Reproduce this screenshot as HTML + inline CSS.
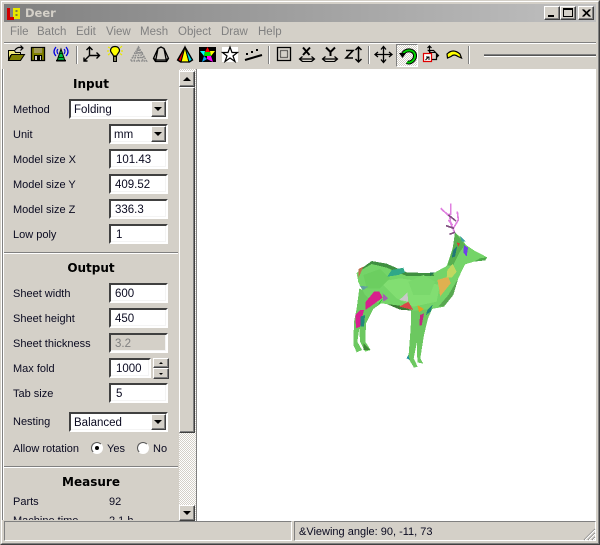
<!DOCTYPE html>
<html><head><meta charset="utf-8"><style>
html,body{margin:0;padding:0;width:600px;height:545px;overflow:hidden;background:#d4d0c8}
*{box-sizing:border-box}
body{font:11px/13px "Liberation Sans",sans-serif;color:#000;position:relative}
.a{position:absolute}
.t{position:absolute;white-space:nowrap;color:#0a0a20;margin-top:1px}
.h{position:absolute;left:4px;width:174px;text-align:center;font:bold 12px/15px "DejaVu Sans",sans-serif;color:#000;margin-top:1px}
.m{position:absolute;top:26px;color:#808080;white-space:nowrap;font-size:11.500px}
.i{position:absolute;height:20px;background:#fff;border:2px solid;border-color:#404040 #fff #fff #404040;padding:2px 0 0 3px;line-height:14px;box-shadow:0 0 0 0 #fff,inset -1px -1px 0 #f4f4f4;white-space:nowrap;font-size:11.500px;color:#0a0a20}
.btn{position:absolute;background:#d4d0c8;border:1px solid;border-color:#fff #404040 #404040 #fff;box-shadow:inset -1px -1px 0 #808080}
.ar{position:absolute;width:0;height:0;border-left:4px solid transparent;border-right:4px solid transparent}
.sep{position:absolute;top:46px;width:2px;height:18px;background:#808080;border-right:1px solid #fff}
svg{position:absolute;overflow:visible}
</style></head><body>

<!-- window frame -->
<div class="a" style="left:0;top:0;width:600px;height:545px;border:1px solid;border-color:#d4d0c8 #404040 #404040 #d4d0c8"></div>
<div class="a" style="left:1px;top:1px;width:598px;height:543px;border:1px solid;border-color:#fff #808080 #808080 #fff"></div>

<!-- title bar -->
<div class="a" style="left:4px;top:4px;width:592px;height:18px;background:linear-gradient(90deg,#808080,#c0c0c0)"></div>
<svg style="left:0;top:0" width="24" height="24" viewBox="0 0 24 24">
<path d="M7 8h3v9h4v3H7z" fill="#d00000"/><path d="M13 8h7v11h-6v-2h-1z" fill="#e8e800"/><path d="M15.500 10h2v2h-2zM15.500 14h2v2h-2z" fill="#808040"/>
</svg>
<div class="a" style="left:25px;top:6px;font:bold 11.500px/14px 'DejaVu Sans',sans-serif;color:#d4d0c8">Deer</div>
<div class="btn" style="left:544px;top:6px;width:16px;height:14px"><div class="a" style="left:3px;top:8px;width:6px;height:2px;background:#000"></div></div>
<div class="btn" style="left:560px;top:6px;width:16px;height:14px"><div class="a" style="left:2px;top:1px;width:10px;height:9px;border:1px solid #000;border-top-width:2px"></div></div>
<div class="btn" style="left:578px;top:6px;width:16px;height:14px"><svg style="left:3px;top:2px" width="9" height="8"><path d="M0.500 0.500L7.500 7.500M1.500 0.500L8.500 7.500M7.500 0.500L0.500 7.500M8.500 0.500L1.500 7.500" stroke="#000"/></svg></div>

<!-- menu -->
<div class="m" style="left:10px">File</div>
<div class="m" style="left:37px">Batch</div>
<div class="m" style="left:76px">Edit</div>
<div class="m" style="left:106px">View</div>
<div class="m" style="left:140px">Mesh</div>
<div class="m" style="left:178px">Object</div>
<div class="m" style="left:221px">Draw</div>
<div class="m" style="left:258px">Help</div>
<div class="a" style="left:4px;top:42px;width:592px;height:2px;background:#808080;border-bottom:1px solid #fff"></div>

<!-- toolbar: svg y = screen y - 42 -->
<svg style="left:0;top:42px" width="600" height="26" viewBox="0 0 600 26" fill="none" stroke="#000">
<!-- open -->
<path d="M8.500 8.500h6l1 2h5v3H10.500l-2 5z" fill="#f0e878"/><path d="M8.500 18.500l3-6h13l-4 6z" fill="#808000"/><path d="M15 8q3-4 7-2M20.500 3.500l2.500 2.500-2.500 2.500" stroke-width="1.200"/>
<!-- save -->
<path d="M31.500 5.500h13v13h-13z" fill="#808000" stroke-width="1.300"/><path d="M34 6v5h8V6z" fill="#a09858" stroke="none"/><path d="M34.500 13.500h7v5h-7z" fill="#d4d0c8"/><path d="M37 14h3v4h-3z" fill="#000" stroke="none"/>
<!-- antenna -->
<path d="M58 7q-2 2 0 5M64 7q2 2 0 5M56 5q-4 5 0 9M66 5q4 5 0 9" stroke="#0000e0" stroke-width="1.200"/>
<path d="M61 7l4 12h-8z" fill="#00c040"/><path d="M57.500 15.500h7M59 11.500h4" stroke="#003000"/><path d="M56 18.500h10" stroke-width="1.500"/>
<!-- axes -->
<path d="M89.500 5v9M86.500 8l3-3 3 3M89.500 13.500h10M96.500 10.500l3 3-3 3M89.500 13.500l-5.500 5.500M84 15.500V19h3.500" stroke-width="1.400"/>
<!-- bulb -->
<path d="M115 4.500c-3 0-4.500 2-4.500 4 0 2 2.500 3.500 3 5.500h3c.5-2 3-3.500 3-5.500 0-2-1.500-4-4.500-4z" fill="#ffff00" stroke-width="1.200"/><path d="M113.500 14.500h3v5h-3z" fill="#0000c0"/><path d="M114 16h2M114 18h2" stroke="#ffff00"/><path d="M108 5l2 1M107 9h2M122 4l-2 2M123 9h-2M122 13l-2-1.500M108 13l2-1.500" stroke="#e8e800" stroke-width="1.200"/>
<!-- mesh -->
<path d="M138.500 5l8 14h-16zM134 11h9M132 15.500h13M138.500 5v14M134 19l4.500-14 4.500 14" stroke="#8c8c8c" stroke-dasharray="1.500 1" stroke-width="1.500"/>
<!-- cone -->
<path d="M161 5l-3 1.500-4.500 10 2 3h11l2-3-4.500-10zM158 6.500l-2.500 13M164 6.500l2.500 13M153.500 16.500l3 1.500h9l3-1.500" stroke-width="1.300"/>
<!-- colour cone -->
<path d="M185 5l-7 13 3 2z" fill="#e00000"/><path d="M185 5l-4 15h8z" fill="#ffff00"/><path d="M185 5l4 15 3.500-2z" fill="#00d0e0"/><path d="M185 5l-7.500 13 3 2h9l3-2z" stroke-width="1.300"/>
<!-- colour star -->
<path d="M199 5h17v15h-17z" fill="#000" stroke="none"/>
<path d="M207.500 5l-2.500 5h5z" fill="#f00" stroke="none"/><path d="M200 9h5l-1 5z" fill="#00ffff" stroke="none"/><path d="M205 10h5l1 4h-7z" fill="#00e000" stroke="none"/><path d="M210 9h5l-4 5z" fill="#ffff00" stroke="none"/><path d="M204 14l-2 6 5-3z" fill="#00a0ff" stroke="none"/><path d="M207 14h4l2 6-6-3z" fill="#ff00ff" stroke="none"/>
<!-- star -->
<path d="M222 5h16v15h-16z" fill="#fff" stroke="none"/>
<path d="M230 5l2 5.500h5.500l-4.500 3.500 2 5.500-5-3.500-5 3.500 2-5.500-4.500-3.500h5.500z" stroke-width="1.200"/>
<!-- dots -->
<path d="M245 18l17-5" stroke-width="2"/><path d="M246 11h2v2h-2zM251 9h2v2h-2zM256 7h2v2h-2z" fill="#000" stroke="none"/>
<!-- box -->
<path d="M277.500 5.500h13v13h-13z" stroke-width="1.300"/><path d="M280.500 8.500h7v7h-7z" stroke-dasharray="1 1" stroke-width="1.200"/>
<!-- X -->
<path d="M303 5.500l6.500 7.500M310 5.500l-7 7.500" stroke-width="2"/><path d="M300 17h14M302.500 14.500l-3 2.500 3 2.500M311.500 14.500l3 2.500-3 2.500" stroke-width="1.200"/><path d="M302 19.500h10" stroke-width="1"/>
<!-- Y -->
<path d="M326 5.500l4.500 4.500 4.500-4.500M330.500 10v4" stroke-width="2"/><path d="M323 17h14M325.500 14.500l-3 2.500 3 2.500M334.500 14.500l3 2.500-3 2.500" stroke-width="1.200"/><path d="M325 19.500h10"/>
<!-- Z -->
<path d="M346 8.500h7l-7 7.500h7" stroke-width="1.600"/><path d="M358.500 6v13M355.500 8l3-3 3 3M355.500 17l3 3 3-3" stroke-width="1.500"/>
<!-- move -->
<path d="M383.500 5v15M375.500 12.500h16M381 7.500l2.500-3 2.500 3M381 17.500l2.500 3 2.500-3M378 10l-3 2.500 3 2.500M389 10l3 2.500-3 2.500" stroke-width="1.300"/>
<!-- cube -->
<path d="M428.500 8.500h5l3 3v6h-6V10.500z" stroke-width="1.200"/><path d="M429 10.500h7" stroke-width="1"/><path d="M429.500 4v5M427.500 6l2-2 2 2M436 13.500h2M436.500 11.500l2 2-2 2" stroke-width="1.200"/>
<path d="M423.500 11.500h8v8h-8z" fill="#fff" stroke="#e00000" stroke-width="1.200"/><path d="M425.500 18l3-3M426 15h3v3" stroke-width="1"/>
<!-- yellow arc -->
<path d="M447 12q6-6 13 0l1.500 4-3.500-1.500q-4-3-7 0l-3.500 1.500z" fill="#ffff00" stroke-width="1.200"/>
</svg>
<!-- pressed rotate button -->
<div class="a" style="left:396px;top:44px;width:22px;height:23px;border:1px solid;border-color:#808080 #fff #fff #808080;background:repeating-conic-gradient(#fff 0 25%,#d4d0c8 0 50%) 0 0/2px 2px"></div>
<svg style="left:396px;top:44px" width="22" height="23" fill="none">
<path d="M7 10c2-5 11-5 12 1 .5 5-5 9-8 7" stroke="#000" stroke-width="4"/><path d="M7 10c2-5 11-5 12 1 .5 5-5 9-8 7" stroke="#00d000" stroke-width="2"/>
<path d="M3 9l7 0-3.500 5z" fill="#000"/>
</svg>
<div class="sep" style="left:76px"></div>
<div class="sep" style="left:268px"></div>
<div class="sep" style="left:368px"></div>
<div class="sep" style="left:468px"></div>
<div class="a" style="left:484px;top:54px;width:112px;height:3px;background:#555;border-top:1px solid #808080;border-bottom:1px solid #fff"></div>

<!-- left panel -->
<div class="a" style="left:2px;top:69px;width:2px;height:451px;background:#fff;border-left:1px solid #808080"></div>
<div class="a" style="left:0;top:0;width:179px;height:520px;overflow:hidden">
<div class="h" style="top:76px">Input</div>
<div class="t" style="left:13px;top:103px">Method</div>
<div class="i" style="left:69px;top:99px;width:99px">Folding</div>
<div class="t" style="left:13px;top:128px">Unit</div>
<div class="i" style="left:109px;top:124px;width:59px;padding-left:3px">mm</div>
<div class="t" style="left:13px;top:153px">Model size X</div>
<div class="i" style="left:109px;top:149px;width:59px;padding-left:5px">101.43</div>
<div class="t" style="left:13px;top:178px">Model size Y</div>
<div class="i" style="left:109px;top:174px;width:59px;padding-left:4px">409.52</div>
<div class="t" style="left:13px;top:203px">Model size Z</div>
<div class="i" style="left:109px;top:199px;width:59px;padding-left:4px">336.3</div>
<div class="t" style="left:13px;top:228px">Low poly</div>
<div class="i" style="left:109px;top:224px;width:59px;padding-left:5px">1</div>
<div class="a" style="left:4px;top:252px;width:174px;height:2px;background:#808080;border-bottom:1px solid #fff"></div>
<div class="h" style="top:260px">Output</div>
<div class="t" style="left:13px;top:287px">Sheet width</div>
<div class="i" style="left:109px;top:283px;width:59px;padding-left:4px">600</div>
<div class="t" style="left:13px;top:312px">Sheet height</div>
<div class="i" style="left:109px;top:308px;width:59px;padding-left:4px">450</div>
<div class="t" style="left:13px;top:337px">Sheet thickness</div>
<div class="i" style="left:109px;top:333px;width:59px;padding-left:4px;background:#d4d0c8;color:#808080">3.2</div>
<div class="t" style="left:13px;top:362px">Max fold</div>
<div class="i" style="left:109px;top:358px;width:42px;padding-left:5px">1000</div>
<div class="t" style="left:13px;top:387px">Tab size</div>
<div class="i" style="left:109px;top:383px;width:59px;padding-left:5px">5</div>
<div class="t" style="left:13px;top:415px">Nesting</div>
<div class="i" style="left:69px;top:412px;width:99px">Balanced</div>
<div class="t" style="left:13px;top:442px">Allow rotation</div>
<div class="t" style="left:107px;top:442px">Yes</div>
<div class="t" style="left:153px;top:442px">No</div>
<div class="a" style="left:91px;top:442px;width:12px;height:12px;border-radius:50%;background:#fff;border:1px solid;border-color:#555 #fff #fff #555"></div>
<div class="a" style="left:95px;top:446px;width:4px;height:4px;border-radius:50%;background:#000"></div>
<div class="a" style="left:137px;top:442px;width:12px;height:12px;border-radius:50%;background:#fff;border:1px solid;border-color:#555 #fff #fff #555"></div>
<div class="a" style="left:4px;top:466px;width:174px;height:2px;background:#808080;border-bottom:1px solid #fff"></div>
<div class="h" style="top:474px">Measure</div>
<div class="t" style="left:13px;top:495px">Parts</div>
<div class="t" style="left:109px;top:495px">92</div>
<div class="t" style="left:13px;top:514px">Machine time</div>
<div class="t" style="left:109px;top:514px">2.1 h</div>
</div>
<!-- combo buttons -->
<div class="btn" style="left:151px;top:101px;width:15px;height:16px"><div class="ar" style="left:2px;top:5px;border-top:4px solid #000"></div></div>
<div class="btn" style="left:151px;top:126px;width:15px;height:16px"><div class="ar" style="left:2px;top:5px;border-top:4px solid #000"></div></div>
<div class="btn" style="left:151px;top:414px;width:15px;height:16px"><div class="ar" style="left:2px;top:5px;border-top:4px solid #000"></div></div>
<!-- spinner -->
<div class="btn" style="left:153px;top:358px;width:16px;height:10px"><div class="ar" style="left:5px;top:3px;border-left-width:2px;border-right-width:2px;border-bottom:2px solid #000"></div></div>
<div class="btn" style="left:153px;top:368px;width:16px;height:11px"><div class="ar" style="left:5px;top:4px;border-left-width:2px;border-right-width:2px;border-top:2px solid #000"></div></div>

<!-- scrollbar -->
<div class="a" style="left:179px;top:69px;width:17px;height:452px;background:repeating-conic-gradient(#fff 0 25%,#d4d0c8 0 50%) 0 0/2px 2px"></div>
<div class="btn" style="left:179px;top:71px;width:16px;height:16px"><div class="ar" style="left:3px;top:5px;border-bottom:4px solid #000"></div></div>
<div class="btn" style="left:179px;top:87px;width:16px;height:346px"></div>
<div class="btn" style="left:179px;top:505px;width:16px;height:16px"><div class="ar" style="left:3px;top:5px;border-top:4px solid #000"></div></div>

<!-- canvas -->
<div class="a" style="left:196px;top:69px;width:400px;height:452px;background:#fff;border-left:1px solid #808080"></div>
<svg style="left:340px;top:195px" width="160" height="180" viewBox="0 0 480 540" shape-rendering="crispEdges">
<!-- antlers -->
<g fill="none" stroke-width="5">
<path d="M345 115L332 85 328 55M332 25L332 60M302 40L330 65M340 100L355 75 352 50M338 90L325 75" stroke="#e080e0"/>
<path d="M342 100L318 92M345 112L328 118M325 60L348 78" stroke="#805080"/>
</g>
<!-- hind legs -->
<path d="M58 280L130 320 100 342 78 385 76 440 92 465 75 470 60 440 58 400 52 440 66 465 50 472 40 450 42 380 50 340z" fill="#6cc860"/>
<!-- front legs -->
<path d="M214 335L282 330 264 370 252 420 241 490 250 506 232 502 231 440 221 490 233 515 222 518 205 490 212 400z" fill="#6cc860"/>
<!-- body -->
<path d="M345 112L365 130 378 150 405 168 442 187 436 196 402 200 375 208 355 250 340 300 312 335 275 342 220 347 180 344 140 327 100 322 75 300 55 262 50 235 65 220 95 198 140 206 200 232 280 235 320 213 338 160z" fill="#74d468"/>
<path d="M95 198L140 206 200 232 280 235 282 243 200 243 140 218 95 207 62 226 65 220z" fill="#3f8f40"/>
<path d="M345 112L360 130 375 150 360 170 340 210 322 212 338 160z" fill="#58b050"/>
<path d="M355 250L340 300 312 335 295 335 325 300z" fill="#58a850"/>
<path d="M140 327L180 344 218 347 180 332z" fill="#3c7c34"/>
<path d="M402 200L436 196 442 187 420 190z" fill="#4ca848"/>
<path d="M120 260L180 250 250 260 300 270 290 320 220 335 170 310z" fill="#82de72"/>
<path d="M70 240L120 222 150 250 120 280 80 280z" fill="#6cce60"/>
<path d="M205 260L250 240 285 260 270 300 220 300z" fill="#7ad86c"/>
<!-- patches -->
<path d="M142 245L155 225 190 218 195 232 175 240z" fill="#30a888"/>
<path d="M102 290L118 290 128 308 95 332 76 345 76 322z" fill="#d8208c"/>
<path d="M128 295L145 310 130 320z" fill="#a060b0"/>
<path d="M112 330L130 308 120 325z" fill="#20c020"/>
<path d="M60 345L72 345 60 395 48 400 46 360z" fill="#d82090"/>
<path d="M62 365L75 360 72 395 62 395z" fill="#208878"/>
<path d="M178 315L202 293 205 320z" fill="#c8c8c8"/>
<path d="M178 335L205 320 220 345z" fill="#d84848"/>
<path d="M232 330L252 342 237 352z" fill="#e0a020"/>
<path d="M262 345L278 328 272 350 258 360z" fill="#208878"/>
<path d="M240 360L252 355 245 392 238 392z" fill="#c02880"/>
<path d="M292 255L325 245 332 265 300 305 298 285z" fill="#e0b050"/>
<path d="M322 225L338 207 350 230 335 248 320 248z" fill="#c0d860"/>
<path d="M372 150L384 158 380 185 370 172z" fill="#7040e8"/>
<path d="M350 142L360 145 355 155z" fill="#d84030"/>
<path d="M340 165L352 152 345 185 335 188z" fill="#207878"/>
<path d="M55 222L70 215 55 250z" fill="#c07050"/>
<path d="M58 272L85 275 70 285z" fill="#60a0a0"/>
<path d="M270 233L285 232 270 243z" fill="#207850"/>
<path d="M205 480L210 495 200 490z" fill="#2090a0"/>
<path d="M70 445L90 465 70 465z" fill="#408838"/>
<path d="M360 122L378 140 365 140z" fill="#40a0a0"/>
</svg>

<!-- status bar -->
<div class="a" style="left:4px;top:521px;width:288px;height:20px;border:1px solid;border-color:#808080 #fff #fff #808080"></div>
<div class="a" style="left:294px;top:521px;width:302px;height:20px;border:1px solid;border-color:#808080 #fff #fff #808080"></div>
<div class="a" style="left:299px;top:526px;white-space:nowrap;font-size:11px;color:#0a0a20">&amp;Viewing angle: 90, -11, 73</div>
<svg style="left:582px;top:527px" width="14" height="14"><path d="M13 2L2 13M13 6L6 13M13 10L10 13" stroke="#808080"/><path d="M13 3L3 13M13 7L7 13M13 11L11 13" stroke="#fff"/></svg>
</body></html>
